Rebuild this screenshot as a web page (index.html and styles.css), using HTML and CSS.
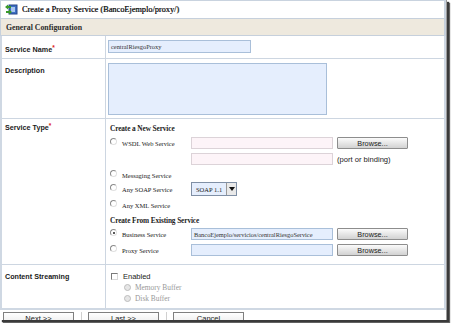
FILE: index.html
```html
<!DOCTYPE html>
<html>
<head>
<meta charset="utf-8">
<link rel="stylesheet" href="styles.css">
</head>
<body>
<div class="frame">
  <div class="titlebar">
    <svg class="ticon" width="13" height="11" viewBox="0 0 13 11">
      <rect x="4" y="1" width="8" height="9" fill="#3d6fc4" stroke="#24478a" stroke-width="1"/>
      <rect x="6" y="3" width="4" height="5" fill="#a9c6f0"/>
      <path d="M0 3 L3 0.5 L3 2 L6 2 L6 4 L3 4 L3 5.5 Z" fill="#3a9a2a"/>
      <path d="M7 8 L4 5.5 L4 7 L1 7 L1 9 L4 9 L4 10.5 Z" fill="#3a9a2a"/>
    </svg>
    <span class="title">Create a Proxy Service (BancoEjemplo/proxy/)</span>
  </div>
  <div class="section">General Configuration</div>
  <div class="table">
    <div class="row r-name">
      <div class="label">Service Name<span class="req">*</span></div>
      <div class="value"><div class="input blue w142">centralRiesgoProxy</div></div>
    </div>
    <div class="row r-desc">
      <div class="label">Description</div>
      <div class="value"><div class="textarea"></div></div>
    </div>
    <div class="row r-type">
      <div class="label">Service Type<span class="req">*</span></div>
      <div class="value types">
        <div class="head h1">Create a New Service</div>
        <div class="line l-wsdl">
          <span class="opt"><span class="radio"></span>WSDL Web Service</span>
          <div class="input pink"></div>
          <div class="btn">Browse...</div>
        </div>
        <div class="line l-port">
          <span class="opt"></span>
          <div class="input pink"></div>
          <span class="hint">(port or binding)</span>
        </div>
        <div class="line l-msg">
          <span class="opt"><span class="radio"></span>Messaging Service</span>
        </div>
        <div class="line l-soap">
          <span class="opt"><span class="radio"></span>Any SOAP Service</span>
          <div class="select"><span class="sel-text">SOAP 1.1</span><span class="sel-arrow"></span></div>
        </div>
        <div class="line l-xml">
          <span class="opt"><span class="radio"></span>Any XML Service</span>
        </div>
        <div class="head h2">Create From Existing Service</div>
        <div class="line l-bus">
          <span class="opt"><span class="radio checked"></span>Business Service</span>
          <div class="input blue">BancoEjemplo/servicios/centralRiesgoService</div>
          <div class="btn">Browse...</div>
        </div>
        <div class="line l-proxy">
          <span class="opt"><span class="radio"></span>Proxy Service</span>
          <div class="input blue"></div>
          <div class="btn">Browse...</div>
        </div>
      </div>
    </div>
    <div class="row r-stream">
      <div class="label">Content Streaming</div>
      <div class="value stream">
        <div class="chk-line"><span class="checkbox"></span>Enabled</div>
        <div class="sub"><span class="radio dis"></span>Memory Buffer</div>
        <div class="sub"><span class="radio dis"></span>Disk Buffer</div>
      </div>
    </div>
  </div>
  <div class="buttons">
    <div class="pbtn">Next &gt;&gt;</div>
    <div class="sep"></div>
    <div class="pbtn">Last &gt;&gt;</div>
    <div class="sep"></div>
    <div class="pbtn">Cancel</div>
  </div>
</div>
</body>
</html>
```

FILE: styles.css
```css
* { box-sizing: border-box; }
html, body { margin: 0; padding: 0; background: #ffffff; }
body { width: 451px; height: 323px; overflow: hidden; }

.frame {
  width: 447px;
  height: 320px;
  background: #ffffff;
  overflow: hidden;
  box-shadow: 2px 2px 1px #3a3a3a, 3px 3px 1px #6a6a6a;
  border-right: 1px solid #9a9a9a;
}

.titlebar {
  height: 18px;
  border-top: 1px solid #c9d3df;
  border-left: 1px solid #c9d3df;
  border-right: 2px solid #c9d3df;
  display: flex;
  align-items: center;
  padding-left: 4px;
}
.ticon { flex: none; margin-right: 4px; }
.title {
  font-family: "Liberation Serif", serif;
  font-size: 8.3px;
  color: #111;
  text-shadow: 0.3px 0 0 #555;
}

.section {
  height: 18px;
  background: #eee9de;
  border-top: 1px solid #c6d0dc;
  border-bottom: 1px solid #c6d0dc;
  border-left: 1px solid #c6d0dc;
  border-right: 2px solid #c6d0dc;
  font-family: "Liberation Serif", serif;
  font-weight: bold;
  font-size: 7.8px;
  color: #2a2a2a;
  padding-left: 5px;
  display: flex;
  align-items: center;
}

.table {
  border-left: 2px solid #cfd8e3;
  border-right: 2px solid #cfd8e3;
  border-bottom: 2px solid #cfd8e3;
  width: 446px;
}
.row {
  display: grid;
  grid-template-columns: 104px 1fr;
  border-bottom: 1px solid #cdd6e1;
}
.row:last-child { border-bottom: none; }
.label {
  border-right: 1px solid #cdd6e1;
  font-family: "Liberation Sans", Arial, sans-serif;
  font-weight: bold;
  font-size: 7.2px;
  color: #1a1a1a;
  padding: 9px 0 0 3px;
}
.req { color: #d22; font-size: 6.5px; vertical-align: 2px; }
.value { padding-left: 2px; }

.r-name { height: 23px; }
.r-name .label { padding-top: 8px; }
.r-name .value { padding-top: 4px; }
.r-desc { height: 60px; }
.r-desc .label { padding-top: 7px; }
.r-desc .value { padding-top: 4px; }
.r-type { height: 146px; }
.r-type .label { padding-top: 3px; }
.r-stream { height: 43px; }
.r-stream .label { padding-top: 7px; }

.input {
  height: 13px;
  border: 1px solid #a9bfd9;
  font-family: "Liberation Serif", serif;
  font-size: 6.4px;
  color: #333;
  padding-left: 2px;
  display: flex;
  align-items: center;
  white-space: nowrap;
  overflow: hidden;
}
.blue { background: #e5eefd; }
.pink { background: #fdf4f8; border-color: #dcd3d8; }
.w142 { width: 143px; }
.textarea {
  width: 219px;
  height: 52px;
  background: #e5eefd;
  border: 1px solid #a9bfd9;
}

.types { padding-top: 4px; padding-left: 4px; }
.head {
  font-family: "Liberation Serif", serif;
  font-weight: bold;
  font-size: 7.3px;
  color: #1c1c1c;
  height: 11px;
  line-height: 11px;
  letter-spacing: -0.1px;
}
.h2 { margin-top: 4px; }
.line {
  display: grid;
  grid-template-columns: 77px 142px 74px;
  column-gap: 4px;
  align-items: center;
  height: 12px;
}
.l-wsdl { margin-top: 3px; }
.l-port { margin-top: 4px; }
.l-msg { margin-top: 4px; }
.l-soap { height: 14px; margin-top: 1px; }
.l-xml { margin-top: 3px; }
.l-bus { margin-top: 2px; }
.l-proxy { margin-top: 4px; }
.line .input { height: 12px; }

.opt {
  font-family: "Liberation Serif", serif;
  font-size: 6.5px;
  color: #222;
  display: flex;
  align-items: center;
  white-space: nowrap;
}
.radio {
  width: 7px;
  height: 7px;
  border-radius: 50%;
  border: 1px solid #8a8a8a;
  border-right-color: #e0e0e0;
  border-bottom-color: #e0e0e0;
  background: #fff;
  margin-right: 5px;
  margin-top: -3px;
  flex: none;
  position: relative;
}
.radio.checked::after {
  content: "";
  position: absolute;
  left: 1.5px;
  top: 1.5px;
  width: 2.5px;
  height: 2.5px;
  border-radius: 50%;
  background: #222;
}
.radio.dis { background: #e6e6e6; border-color: #bdbdbd; margin-top: 0; }

.btn {
  height: 12px;
  border: 1px solid #8d8d8d;
  border-radius: 1px;
  background: linear-gradient(#fbfbfb, #e2e2e2 60%, #d2d2d2);
  font-family: "Liberation Sans", Arial, sans-serif;
  font-size: 7.3px;
  color: #222;
  display: flex;
  align-items: center;
  justify-content: center;
  width: 71px;
}
.hint {
  font-family: "Liberation Sans", Arial, sans-serif;
  font-size: 7.6px;
  color: #222;
  white-space: nowrap;
}
.select {
  width: 46px;
  height: 14px;
  border: 1px solid #7f8fa5;
  background: #e5eefd;
  display: flex;
  align-items: center;
  justify-content: space-between;
  font-family: "Liberation Serif", serif;
  font-size: 6.5px;
  color: #222;
}
.sel-text { padding-left: 4px; }
.sel-arrow {
  width: 10px;
  height: 12px;
  border-left: 1px solid #999;
  background: #e9e9e9;
  position: relative;
}
.sel-arrow::after {
  content: "";
  position: absolute;
  left: 2px;
  top: 4px;
  border-left: 3px solid transparent;
  border-right: 3px solid transparent;
  border-top: 4px solid #111;
}

.stream { padding-top: 6px; padding-left: 5px; }
.chk-line {
  display: flex;
  align-items: center;
  font-family: "Liberation Sans", Arial, sans-serif;
  font-size: 7.5px;
  color: #222;
  height: 10px;
}
.checkbox {
  width: 7px;
  height: 7px;
  border: 1px solid #7a7a7a;
  border-right-color: #d8d8d8;
  border-bottom-color: #d8d8d8;
  background: #fff;
  margin-right: 5px;
}
.sub {
  display: flex;
  align-items: center;
  font-family: "Liberation Serif", serif;
  font-size: 7.4px;
  color: #999;
  height: 9px;
  margin-top: 2px;
  padding-left: 13px;
}
.sub .radio { margin-right: 4px; }

.buttons {
  display: flex;
  align-items: flex-start;
  padding: 2px 0 0 3px;
}
.pbtn {
  width: 71px;
  height: 12px;
  border: 1px solid #7f7f7f;
  background: linear-gradient(#ffffff, #ececec);
  font-family: "Liberation Sans", Arial, sans-serif;
  font-size: 7.5px;
  color: #222;
  text-align: center;
  line-height: 11px;
}
.sep {
  width: 1px;
  height: 10px;
  background: #d0d0d0;
  margin: 0 6px 0 7px;
}
```
